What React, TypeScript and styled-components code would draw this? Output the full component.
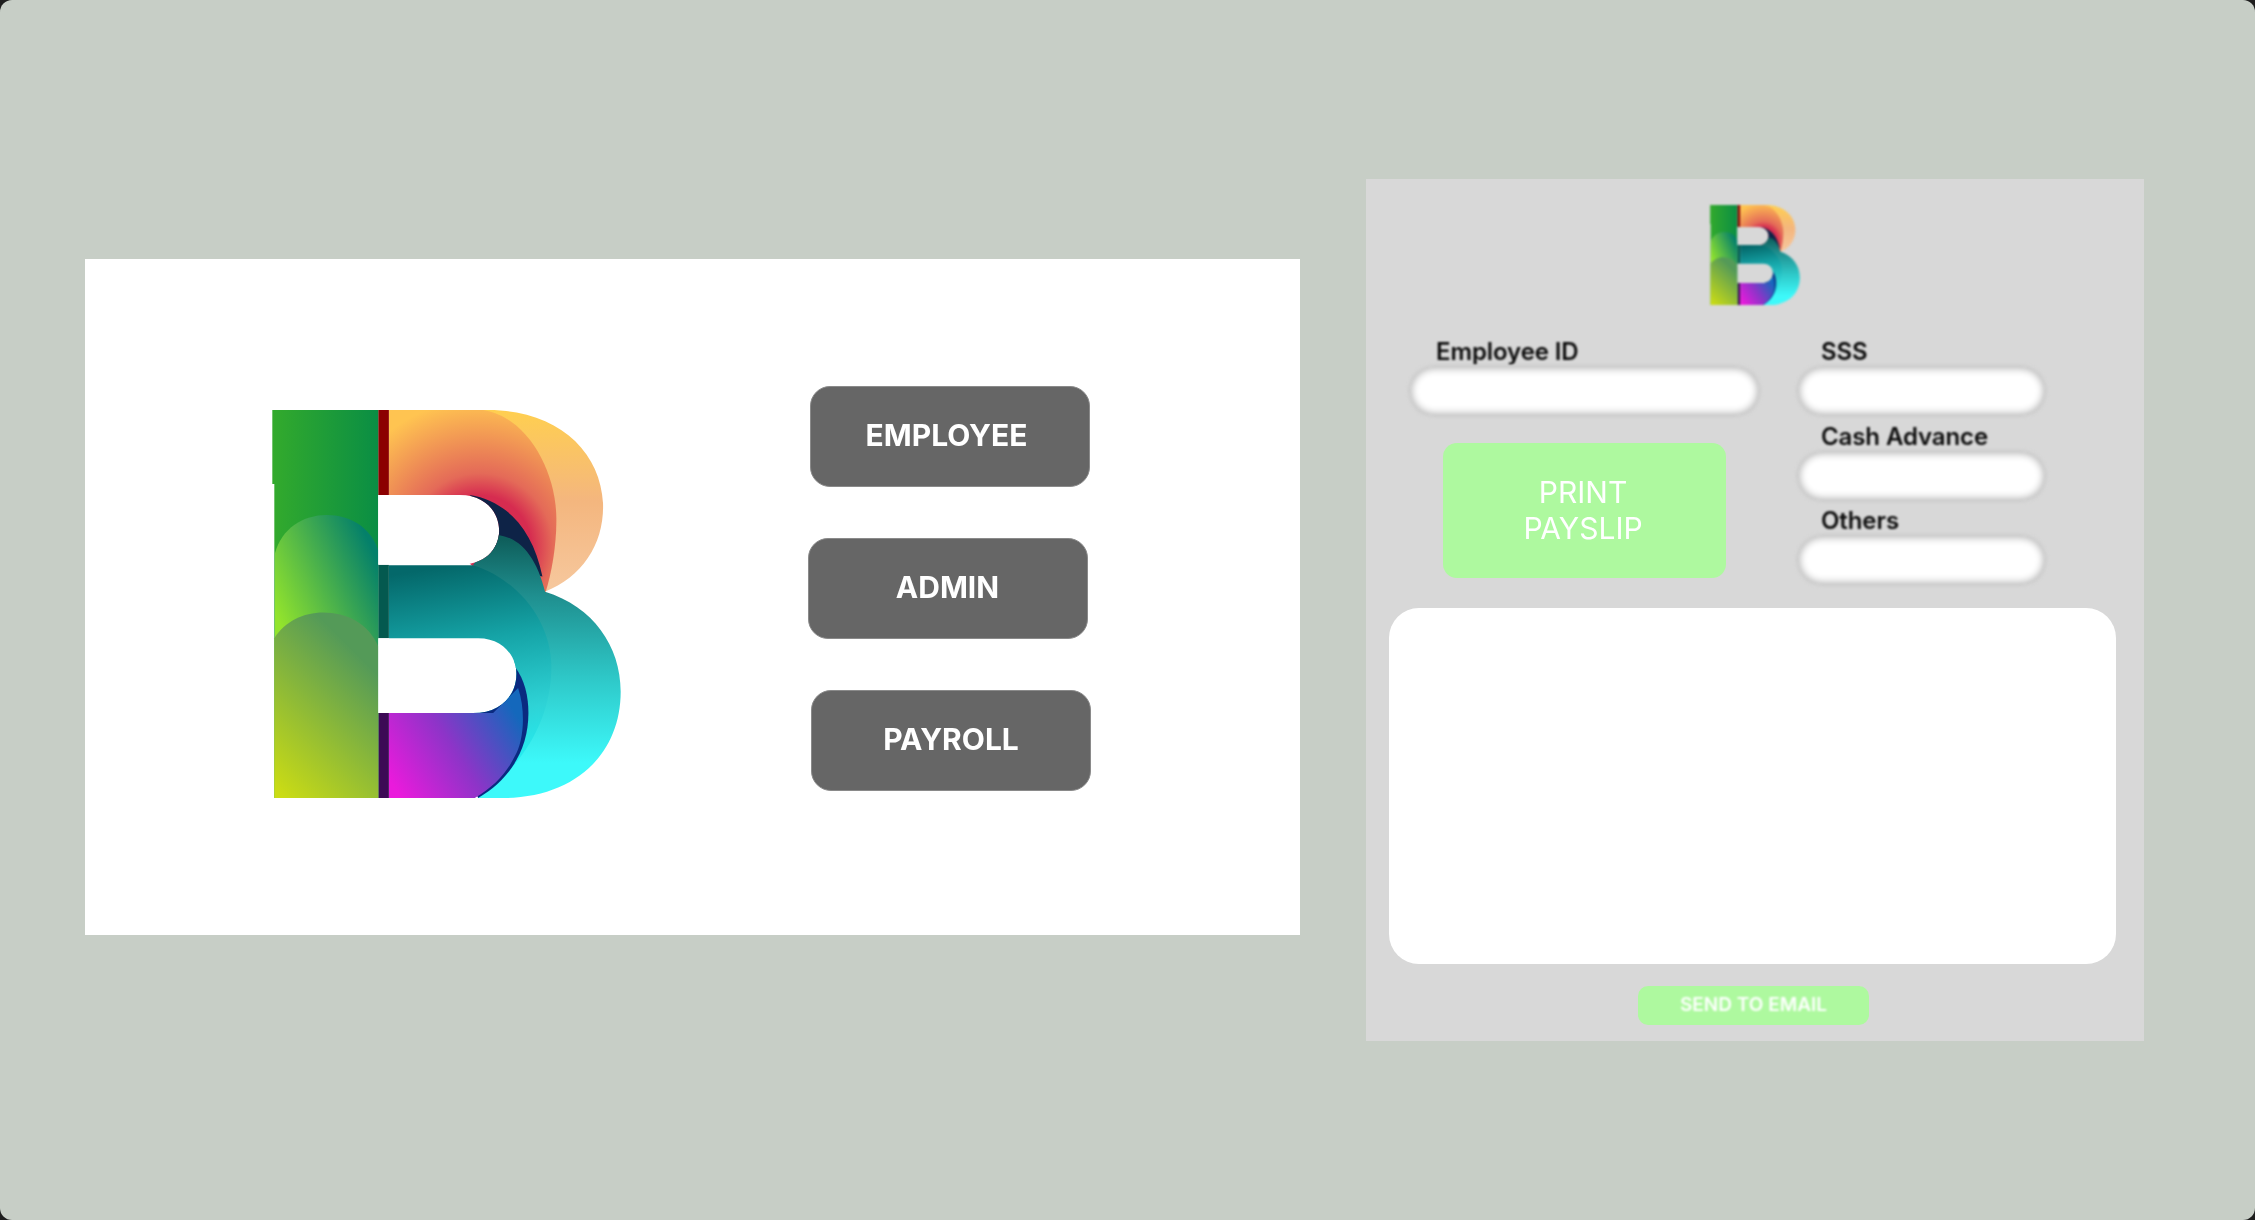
import React, { useId } from "react";
import styled, { createGlobalStyle } from "styled-components";

const Global = createGlobalStyle`
  html, body { margin: 0; padding: 0; background: #1e1e1e; }
  body { font-family: "Inter", "Liberation Sans", sans-serif; }
  #root { width: 2255px; height: 1220px; overflow: hidden; }
`;

const Page = styled.main`
  box-sizing: border-box;
  width: 2255px;
  height: 1220px;
  display: flex;
  align-items: flex-start;
  gap: 66px;
  padding-left: 85px;
  background: #c7cec6;
  border-radius: 12px;
`;

const HomePanel = styled.section`
  box-sizing: border-box;
  width: 1215px;
  height: 676px;
  margin-top: 259px;
  display: flex;
  align-items: flex-start;
  background: #fff;
`;

const HomeLogo = styled.div`
  width: 349px;
  height: 388px;
  margin: 151px 0 0 187px;
  flex: none;
  filter: blur(0.4px);
  svg { display: block; width: 100%; height: 100%; }
`;

const Menu = styled.nav`
  display: flex;
  flex-direction: column;
  align-items: flex-start;
  gap: 51px;
  margin: 127px 0 0 187px;
`;

const MenuButton = styled.button<{ $nudge: number; $textShift: number }>`
  box-sizing: border-box;
  width: 280px;
  height: 101px;
  margin: 0 0 0 ${(p) => p.$nudge}px;
  padding: 0 ${(p) => (p.$textShift < 0 ? -p.$textShift : 0)}px 3px 0;
  border: 1px solid #8a8a8a;
  border-radius: 20px;
  background: #666666;
  color: #fff;
  font-family: "Inter", "Liberation Sans", sans-serif;
  font-size: 30px;
  font-weight: 700;
  filter: blur(0.5px);
`;

const PayslipPanel = styled.section`
  box-sizing: border-box;
  width: 778px;
  height: 862px;
  margin-top: 179px;
  padding-top: 26px;
  display: flex;
  flex-direction: column;
  background: #d8d8d8;
`;

const PayslipLogo = styled.div`
  align-self: center;
  width: 90px;
  height: 100px;
  flex: none;
  filter: blur(1px);
  svg { display: block; width: 100%; height: 100%; }
`;

const FormGrid = styled.div`
  display: grid;
  grid-template-columns: 351px 249px;
  column-gap: 37px;
  margin: 32px 0 0 43px;
`;

const Column = styled.div`
  display: flex;
  flex-direction: column;
  align-items: flex-start;
  gap: 5.5px;
`;

const FieldLabel = styled.label<{ $indent: number }>`
  display: block;
  height: 29px;
  margin-left: ${(p) => p.$indent}px;
  color: #0a0a0a;
  font-size: 24px;
  line-height: 29px;
  font-weight: 600;
  letter-spacing: -0.1px;
  filter: blur(0.8px);
`;

const FieldBox = styled.div`
  box-sizing: border-box;
  height: 50px;
  border-radius: 25px;
  background: #fff;
  box-shadow: inset 0 0 7px 3px #bcbcbc, 0 0 2px 1px #cbcbcb;
  filter: blur(1px);
`;

const WideField = styled(FieldBox)`
  width: 351px;
`;

const NarrowField = styled(FieldBox)`
  width: 249px;
`;

const PrintButton = styled.button`
  box-sizing: border-box;
  width: 283px;
  height: 135px;
  margin: 21px 0 0 34px;
  padding: 0 3px 0 0;
  border: 0;
  border-radius: 14px;
  background: #aef99f;
  color: #fff;
  font-family: "Inter", "Liberation Sans", sans-serif;
  font-size: 30px;
  line-height: 36px;
  font-weight: 400;
`;

const PrintText = styled.span`
  display: block;
  filter: blur(0.7px);
`;

const PreviewBox = styled.div`
  width: 727px;
  height: 356px;
  margin: 23px 0 0 23px;
  border-radius: 30px;
  background: #fff;
`;

const SendButton = styled.button`
  box-sizing: border-box;
  width: 231px;
  height: 39px;
  margin: 22px 0 0 272px;
  padding: 0 0 2px;
  border: 0;
  border-radius: 10px;
  background: #aef99f;
  color: #fff;
  font-family: "Inter", "Liberation Sans", sans-serif;
  font-size: 19px;
  font-weight: 600;
`;

const SendText = styled.span`
  display: block;
  filter: blur(0.9px);
`;

const Logo: React.FC = () => {
  const raw = useId().replace(/[^a-zA-Z0-9]/g, "");
  const id = (n: string) => `${raw}${n}`;
  const u = (n: string) => `url(#${id(n)})`;
  return (
    <svg viewBox="97 90 1046 1165" role="img" aria-label="B logo">
      <defs>
        <clipPath id={id("holes")}>
          <path
            clipRule="evenodd"
            d="M0,0H1300V1320H0Z M415,345H660C740,345 778,400 778,452C778,512 730,555 660,555H415Z M415,775H715C790,775 830,830 830,882C830,950 780,1000 700,1000H415Z"
          />
        </clipPath>
        <linearGradient id={id("stemTop")} x1="0" y1="0" x2="1" y2="0">
          <stop offset="0" stopColor="#33aa2c" />
          <stop offset="1" stopColor="#0a8e44" />
        </linearGradient>
        <linearGradient id={id("stemMid")} gradientUnits="userSpaceOnUse" x1="105" y1="700" x2="420" y2="560">
          <stop offset="0" stopColor="#93e42c" />
          <stop offset="1" stopColor="#04806a" />
        </linearGradient>
        <linearGradient id={id("stemLow")} gradientUnits="userSpaceOnUse" x1="103" y1="1230" x2="430" y2="900">
          <stop offset="0" stopColor="#cbdc14" />
          <stop offset="1" stopColor="#549a58" />
        </linearGradient>
        <linearGradient id={id("bowlBack")} x1="0" y1="0" x2="0" y2="1">
          <stop offset="0" stopColor="#ffcf50" />
          <stop offset="0.5" stopColor="#f4b67e" />
          <stop offset="1" stopColor="#f6c89e" />
        </linearGradient>
        <radialGradient id={id("bowlFront")} gradientUnits="userSpaceOnUse" cx="720" cy="500" r="440">
          <stop offset="0.35" stopColor="#d62c50" />
          <stop offset="0.5" stopColor="#e46a58" />
          <stop offset="1" stopColor="#ffc451" />
        </radialGradient>
        <linearGradient id={id("lowBack")} gradientUnits="userSpaceOnUse" x1="1000" y1="480" x2="1000" y2="1150">
          <stop offset="0" stopColor="#0f5f5c" />
          <stop offset="0.25" stopColor="#1f8f8f" />
          <stop offset="0.62" stopColor="#2ec8c8" />
          <stop offset="1" stopColor="#3df9fa" />
        </linearGradient>
        <linearGradient id={id("lowFront")} gradientUnits="userSpaceOnUse" x1="620" y1="560" x2="720" y2="1200">
          <stop offset="0" stopColor="#04686a" />
          <stop offset="0.35" stopColor="#15a3a6" />
          <stop offset="0.7" stopColor="#2ed3d6" />
          <stop offset="1" stopColor="#22f4f8" />
        </linearGradient>
        <linearGradient id={id("purple")} gradientUnits="userSpaceOnUse" x1="480" y1="1250" x2="840" y2="1020">
          <stop offset="0" stopColor="#ea1adc" />
          <stop offset="0.5" stopColor="#8d34c8" />
          <stop offset="1" stopColor="#1468bc" />
        </linearGradient>
      </defs>
      <g clipPath={u("holes")}>
        <path fill={u("bowlBack")} d="M447,90H745C950,90 1082,210 1090,370C1094,490 1030,590 915,636L860,400Z" />
        <path fill={u("bowlFront")} d="M447,90H730C860,110 950,270 950,420C950,500 935,580 918,636L700,560L447,345Z" />
        <path fill="#0e2347" d="M690,345C800,362 880,450 908,590L760,560L740,400Z" />
        <path fill={u("lowBack")} d="M770,465C840,470 890,530 916,636C1060,680 1143,800 1143,935C1143,1120 1010,1250 800,1255H715L860,700L700,555Z" />
        <path fill={u("lowFront")} d="M447,556H700C840,600 935,730 935,860C935,1010 860,1150 715,1255L700,1100L447,775Z" />
        <path fill="#0a2a80" d="M825,860C855,900 866,950 866,1000C866,1110 810,1200 715,1255L600,1000Z" />
        <path fill={u("purple")} d="M447,1000H760L835,925C860,1000 850,1090 825,1130C795,1190 755,1225 705,1255H447Z" />
        <path fill="#8b0000" d="M415,90H447V345H415Z" />
        <path fill="#04594f" d="M415,555H447V775H415Z" />
        <path fill="#3c0a55" d="M415,1000H447V1255H415Z" />
        <path fill={u("stemTop")} d="M97,90H415V1255H103V312H97Z" />
        <path fill={u("stemMid")} d="M105,520C125,445 190,405 260,405C330,405 390,440 415,510V1255H105Z" />
        <path fill={u("stemLow")} d="M103,775C135,725 190,698 250,698C320,698 385,730 415,800V1255H103Z" />
      </g>
    </svg>
  );
};

export default function App() {
  return (
    <>
      <Global />
      <Page>
        <HomePanel>
          <HomeLogo>
            <Logo />
          </HomeLogo>
          <Menu>
            <MenuButton $nudge={2} $textShift={-7}>EMPLOYEE</MenuButton>
            <MenuButton $nudge={0} $textShift={-1}>ADMIN</MenuButton>
            <MenuButton $nudge={3} $textShift={0}>PAYROLL</MenuButton>
          </Menu>
        </HomePanel>
        <PayslipPanel>
          <PayslipLogo>
            <Logo />
          </PayslipLogo>
          <FormGrid>
            <Column>
              <div>
                <FieldLabel $indent={27}>Employee ID</FieldLabel>
                <WideField />
              </div>
              <PrintButton>
                <PrintText>PRINT</PrintText>
                <PrintText>PAYSLIP</PrintText>
              </PrintButton>
            </Column>
            <Column>
              <div>
                <FieldLabel $indent={24}>SSS</FieldLabel>
                <NarrowField />
              </div>
              <div>
                <FieldLabel $indent={24}>Cash Advance</FieldLabel>
                <NarrowField />
              </div>
              <div>
                <FieldLabel $indent={24}>Others</FieldLabel>
                <NarrowField />
              </div>
            </Column>
          </FormGrid>
          <PreviewBox />
          <SendButton>
            <SendText>SEND TO EMAIL</SendText>
          </SendButton>
        </PayslipPanel>
      </Page>
    </>
  );
}
